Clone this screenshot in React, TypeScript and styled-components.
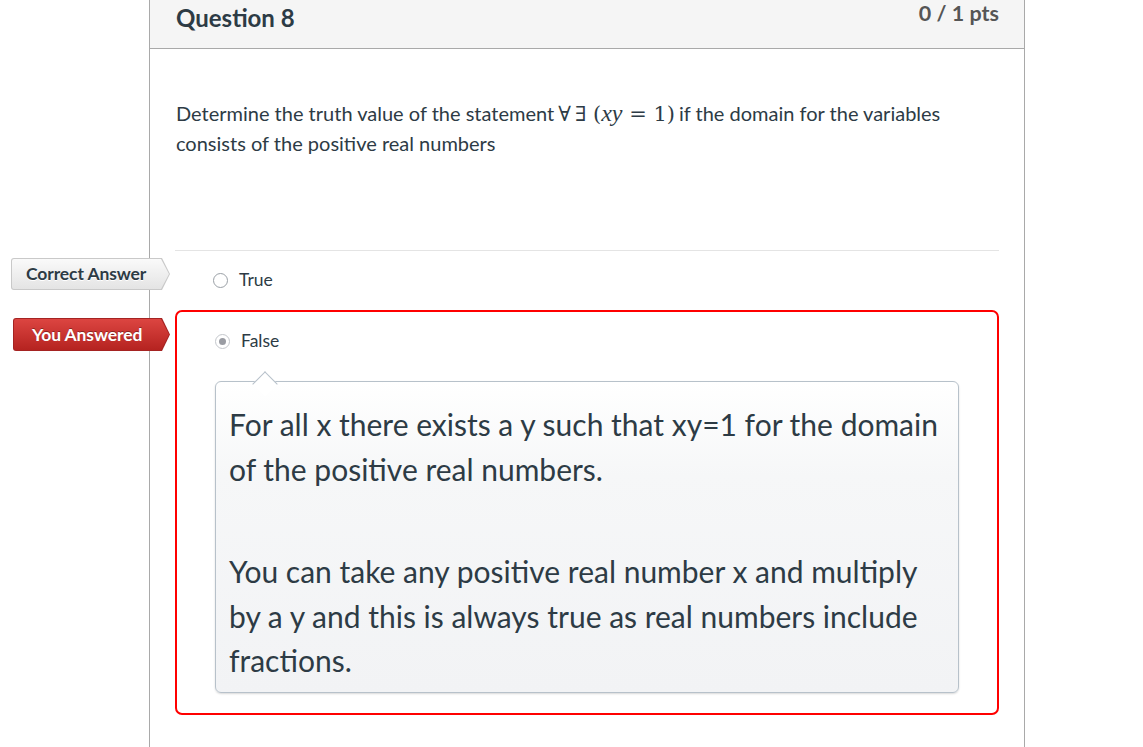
import React from "react";
import styled, { createGlobalStyle } from "styled-components";

const Global = createGlobalStyle`
  html, body { margin: 0; padding: 0; background: #fff; }
  body { font-family: Lato, "Open Sans", "Liberation Sans", sans-serif; color: #2d3b45; }
`;

const Page = styled.div`
  width: 1143px;
  height: 747px;
  overflow: hidden;
  padding-left: 149px;
  box-sizing: border-box;
`;

const Panel = styled.section`
  width: 876px;
  min-height: 747px;
  box-sizing: border-box;
  border-left: 1px solid #a9a9a9;
  border-right: 1px solid #a9a9a9;
`;

const Header = styled.header`
  height: 48px;
  background: #f5f5f5;
  border-bottom: 1px solid #a9a9a9;
  display: flex;
  justify-content: space-between;
  align-items: flex-start;
  padding: 0 25px 0 26px;
`;

const Title = styled.h2`
  margin: 3px 0 0;
  font-size: 24px;
  line-height: 30px;
  font-weight: 700;
  color: #2d3b45;
`;

const Points = styled.div`
  margin-top: -1px;
  font-size: 21.5px;
  line-height: 28px;
  font-weight: 700;
  color: #555555;
`;

const Body = styled.div`
  padding: 49px 25px 0 25px;
`;

const QuestionText = styled.p`
  margin: 0 0 0 1px;
  font-size: 20px;
  line-height: 30px;
  min-height: 152px;
  color: #2d3b45;
`;

const Math = styled.span`
  font-family: "DejaVu Serif", "Liberation Serif", serif;
  font-size: 21px;
  line-height: 1;
  margin: 0 4px 0 4px;
`;

const Quantifier = styled.span`
  margin-right: 4px;
`;

const MathVar = styled.i`
  font-family: "Liberation Serif", serif;
  font-size: 24px;
  line-height: 1;
`;

const Answers = styled.div`
  border-top: 1px solid #e4e4e4;
`;

const AnswerRow = styled.div`
  position: relative;
  display: flex;
  align-items: center;
  gap: 11px;
  padding: 19px 0 19px 38px;
  font-size: 17.5px;
  line-height: 20px;
`;

const Radio = styled.span<{ $checked?: boolean }>`
  width: 15px;
  height: 15px;
  border-radius: 50%;
  box-sizing: border-box;
  border: 1.5px solid ${(p) => (p.$checked ? "#c4c7cc" : "#9aa0a6")};
  background: #fff;
  display: flex;
  align-items: center;
  justify-content: center;
  &::after {
    content: "";
    display: ${(p) => (p.$checked ? "block" : "none")};
    width: 7px;
    height: 7px;
    border-radius: 50%;
    background: #9a9ca3;
  }
`;

const SelectedBox = styled.div`
  position: relative;
  margin-top: 1px;
  border: 2px solid #ff0000;
  border-radius: 7px;
  padding-bottom: 20px;
`;

const Tag = styled.div<{ $variant: "correct" | "wrong" }>`
  position: absolute;
  left: -164px;
  top: ${(p) => (p.$variant === "correct" ? "7px" : "6px")};
  width: ${(p) => (p.$variant === "correct" ? "159px" : "157px")};
  height: ${(p) => (p.$variant === "correct" ? "32px" : "33px")};
  box-sizing: border-box;
  padding: 1px;
  border-radius: 3px 0 0 3px;
  background: ${(p) => (p.$variant === "correct" ? "#c9c9c9" : "#a52322")};
  clip-path: polygon(0 0, calc(100% - 8px) 0, 100% 50%, calc(100% - 8px) 100%, 0 100%);
`;

const TagInner = styled.div<{ $variant: "correct" | "wrong" }>`
  height: 100%;
  box-sizing: border-box;
  border-radius: 2px 0 0 2px;
  clip-path: polygon(0 0, calc(100% - 8px) 0, 100% 50%, calc(100% - 8px) 100%, 0 100%);
  background: ${(p) =>
    p.$variant === "correct"
      ? "linear-gradient(#fafafa, #e4e4e4)"
      : "linear-gradient(#dc4541, #b52320)"};
  color: ${(p) => (p.$variant === "correct" ? "#2d3b45" : "#ffffff")};
  text-shadow: ${(p) => (p.$variant === "correct" ? "0 1px 0 #fff" : "0 -1px 0 rgba(0,0,0,0.35)")};
  font-size: 17.5px;
  font-weight: 700;
  letter-spacing: -0.1px;
  display: flex;
  align-items: center;
  padding-left: ${(p) => (p.$variant === "correct" ? "14px" : "18px")};
`;

const Comment = styled.div`
  position: relative;
  margin: 11px 38px 0 38px;
  background: linear-gradient(#ffffff 0%, #f6f7f8 30%, #f2f3f5 100%);
  border: 1px solid #b7c1ca;
  border-radius: 6px;
  box-shadow: 0 1px 2px rgba(0, 0, 0, 0.15);
  padding: 20px 14px 9px 13px;
  font-size: 30px;
  line-height: 44.5px;
  color: #2d3b45;
  &::before {
    content: "";
    position: absolute;
    left: 40px;
    top: -7px;
    width: 17px;
    height: 17px;
    background: #ffffff;
    border-left: 1px solid #b7c1ca;
    border-top: 1px solid #b7c1ca;
    transform: rotate(45deg);
  }
`;

const CommentPara = styled.p<{ $gap?: boolean }>`
  position: relative;
  margin: ${(p) => (p.$gap ? "58px" : "0")} 0 0;
`;

export default function App() {
  return (
    <>
      <Global />
      <Page>
        <Panel>
          <Header>
            <Title>Question 8</Title>
            <Points>0 / 1 pts</Points>
          </Header>
          <Body>
            <QuestionText>
              Determine the truth value of the statement
              <Math>
                <Quantifier>∀</Quantifier>∃ (<MathVar>xy</MathVar> = 1)
              </Math>
              if the domain for the variables consists of the positive real numbers
            </QuestionText>
            <Answers>
              <AnswerRow>
                <Tag $variant="correct">
                  <TagInner $variant="correct">Correct Answer</TagInner>
                </Tag>
                <Radio />
                <span>True</span>
              </AnswerRow>
              <SelectedBox>
                <Tag $variant="wrong">
                  <TagInner $variant="wrong">You Answered</TagInner>
                </Tag>
                <AnswerRow>
                  <Radio $checked />
                  <span>False</span>
                </AnswerRow>
                <Comment>
                  <CommentPara>
                    For all x there exists a y such that xy=1 for the domain of the positive real numbers.
                  </CommentPara>
                  <CommentPara $gap>
                    You can take any positive real number x and multiply by a y and this is always true as real numbers include fractions.
                  </CommentPara>
                </Comment>
              </SelectedBox>
            </Answers>
          </Body>
        </Panel>
      </Page>
    </>
  );
}
